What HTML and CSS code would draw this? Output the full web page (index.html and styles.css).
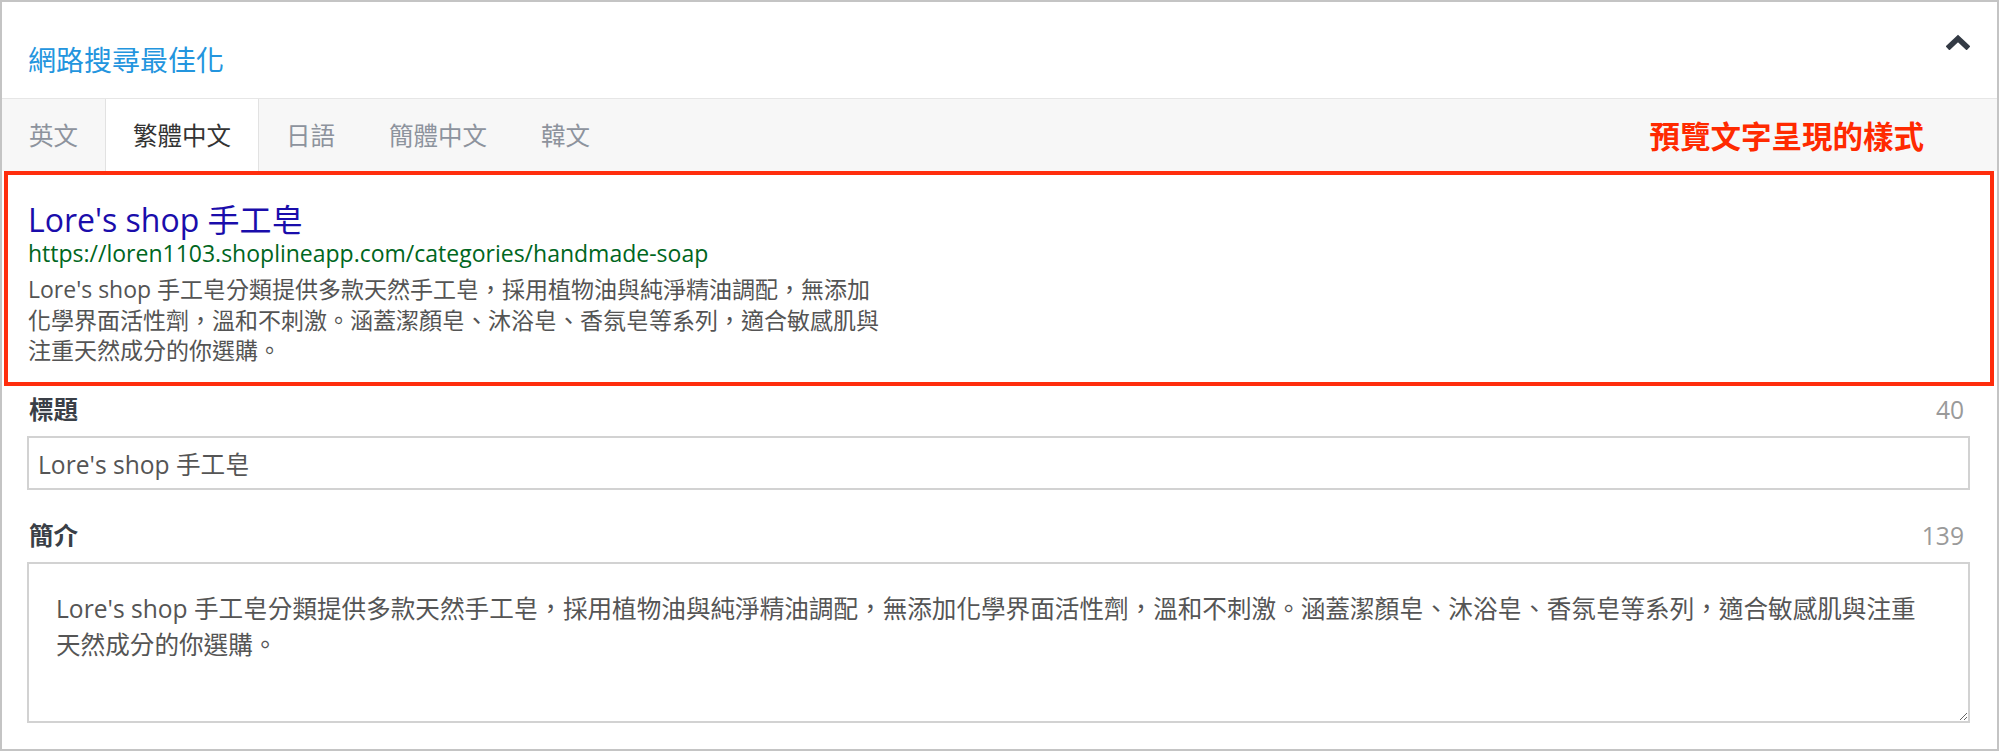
FILE: index.html
```html
<!DOCTYPE html>
<html lang="zh-Hant">
<head>
  <meta charset="UTF-8">
  <meta name="viewport" content="width=device-width, initial-scale=1.0">
  <title>網路搜尋最佳化</title>
  <link rel="stylesheet" href="styles.css">
</head>
<body>
  <div class="panel">
    <div class="panel-header">
      <div class="panel-title">網路搜尋最佳化</div>
      <svg class="toggle" width="24" height="16" viewBox="0 0 24 16">
        <polyline points="3.5,12.5 12,4.5 20.5,12.5" fill="none" stroke="#333a44" stroke-width="5.5" stroke-linecap="square" stroke-linejoin="miter"/>
      </svg>
    </div>

    <div class="tabs">
      <div class="tab">英文</div>
      <div class="tab active">繁體中文</div>
      <div class="tab">日語</div>
      <div class="tab">簡體中文</div>
      <div class="tab">韓文</div>
      <div class="note">預覽文字呈現的樣式</div>
    </div>

    <div class="preview">
      <div class="preview-title">Lore's shop 手工皂</div>
      <div class="preview-url">https://loren1103.shoplineapp.com/categories/handmade-soap</div>
      <div class="preview-desc">Lore's shop 手工皂分類提供多款天然手工皂，採用植物油與純淨精油調配，無添加化學界面活性劑，溫和不刺激。涵蓋潔顏皂、沐浴皂、香氛皂等系列，適合敏感肌與注重天然成分的你選購。</div>
    </div>

    <div class="form">
      <div class="field">
        <div class="field-head">
          <span class="field-label">標題</span>
          <span class="field-count">40</span>
        </div>
        <input class="field-input" type="text" value="Lore's shop 手工皂">
      </div>
      <div class="field">
        <div class="field-head">
          <span class="field-label">簡介</span>
          <span class="field-count">139</span>
        </div>
        <textarea class="field-textarea">Lore's shop 手工皂分類提供多款天然手工皂，採用植物油與純淨精油調配，無添加化學界面活性劑，溫和不刺激。涵蓋潔顏皂、沐浴皂、香氛皂等系列，適合敏感肌與注重天然成分的你選購。</textarea>
      </div>
    </div>
  </div>
</body>
</html>
```

FILE: styles.css
```css
body {
  margin: 0;
  font-family: "Open Sans", "Noto Sans CJK TC", sans-serif;
  background: #fff;
}

.panel {
  box-sizing: border-box;
  width: 1999px;
  height: 751px;
  border: 2px solid #c4c4c4;
  background: #fff;
}

/* cabecera */
.panel-header {
  display: flex;
  justify-content: space-between;
  align-items: flex-start;
  height: 96px;
  padding: 0 27px 0 26px;
  border-bottom: 1px solid #e6e6e6;
}

.panel-title {
  margin-top: 39px;
  font-family: "Noto Sans CJK TC", sans-serif;
  font-size: 28px;
  line-height: 36px;
  color: #2395de;
}

.toggle {
  margin-top: 32px;
}

/* pestañas de idioma */
.tabs {
  display: flex;
  align-items: center;
  height: 72px;
  background: #f7f7f7;
}

.tab {
  padding: 0 27px;
  font-family: "Noto Sans CJK TC", sans-serif;
  font-size: 24.5px;
  line-height: 72px;
  color: #8d939d;
}

.tab.active {
  background: #fff;
  color: #333;
  border-left: 1px solid #e2e2e2;
  border-right: 1px solid #e2e2e2;
}

.note {
  margin-left: auto;
  padding-right: 73px;
  font-family: "Noto Sans CJK TC", sans-serif;
  font-weight: bold;
  font-size: 30.5px;
  line-height: 40px;
  color: #ff2a00;
}

/* vista previa */
.preview {
  margin: 0 3px 0 2px;
  padding: 26px 20px 16px 20px;
  border: 4px solid #ff2d0d;
}

.preview-title {
  font-size: 32px;
  line-height: 38px;
  color: #1a0dab;
}

.preview-url {
  font-size: 23px;
  line-height: 28px;
  color: #006621;
}

.preview-desc {
  max-width: 852px;
  margin-top: 7px;
  font-size: 23px;
  line-height: 30.5px;
  color: #545454;
}

/* formulario */
.form {
  padding: 0 27px 0 25px;
}

.field-head {
  display: flex;
  justify-content: space-between;
  margin-bottom: 11px;
  font-size: 24.6px;
  line-height: 30px;
}

.field:first-child .field-head {
  margin-top: 9px;
}

.field + .field .field-head {
  margin-top: 31px;
}

.field-label {
  padding-left: 2px;
  font-weight: bold;
  color: #3a3f47;
}

.field-count {
  padding-right: 6px;
  color: #9a9a9a;
}

.field-input,
.field-textarea {
  display: block;
  box-sizing: border-box;
  width: 100%;
  margin: 0;
  border: 2px solid #d2d2d2;
  border-radius: 0;
  font-family: inherit;
  font-size: 24.6px;
  color: #555;
  outline: none;
}

.field-input {
  height: 54px;
  padding: 0 9px;
}

.field-textarea {
  height: 161px;
  padding: 27px 42px 27px 27px;
  line-height: 36px;
  resize: vertical;
}
```
